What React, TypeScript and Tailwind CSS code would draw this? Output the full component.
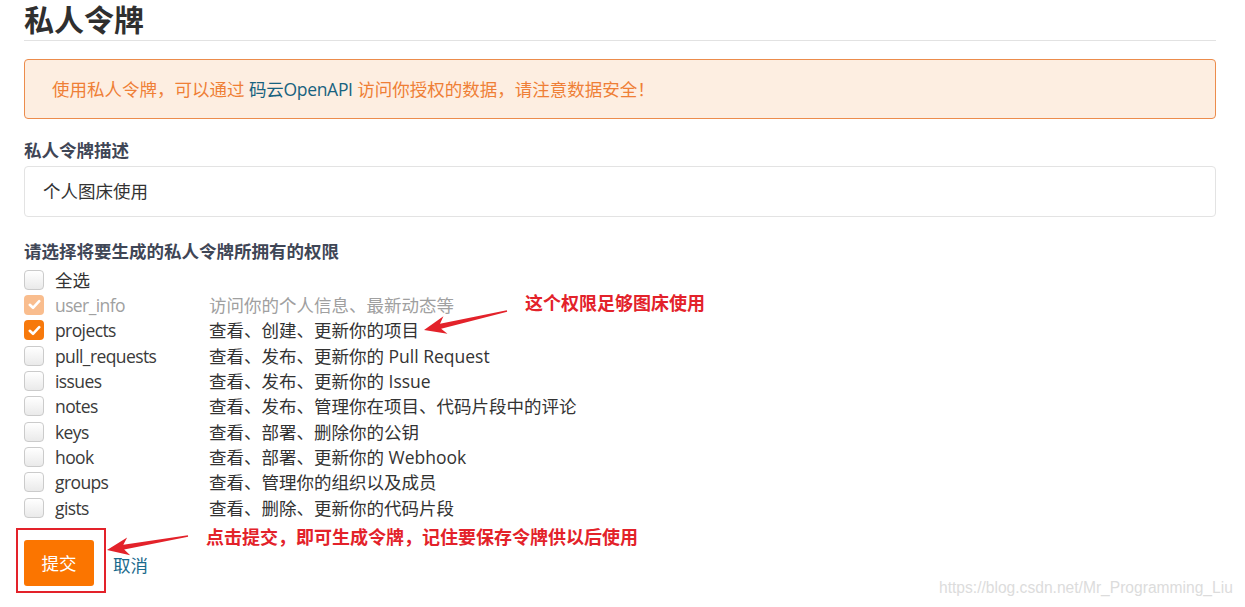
import React from "react";

const rows: { key: string; desc: string; state: "none" | "disabled" | "checked" }[] = [
  { key: "user_info", desc: "访问你的个人信息、最新动态等", state: "disabled" },
  { key: "projects", desc: "查看、创建、更新你的项目", state: "checked" },
  { key: "pull_requests", desc: "查看、发布、更新你的 Pull Request", state: "none" },
  { key: "issues", desc: "查看、发布、更新你的 Issue", state: "none" },
  { key: "notes", desc: "查看、发布、管理你在项目、代码片段中的评论", state: "none" },
  { key: "keys", desc: "查看、部署、删除你的公钥", state: "none" },
  { key: "hook", desc: "查看、部署、更新你的 Webhook", state: "none" },
  { key: "groups", desc: "查看、管理你的组织以及成员", state: "none" },
  { key: "gists", desc: "查看、删除、更新你的代码片段", state: "none" },
];

function Box({ state }: { state: "none" | "disabled" | "checked" }) {
  if (state === "none") {
    return (
      <span className="block w-[20px] h-[20px] rounded-[4px] border border-[#cbcbcb] bg-gradient-to-b from-[#ffffff] to-[#eaeaea] shrink-0" />
    );
  }
  const bg = state === "checked" ? "bg-[#f7790c]" : "bg-[#f9bd8e]";
  return (
    <span className={`flex items-center justify-center w-[20px] h-[20px] rounded-[4px] shrink-0 ${bg}`}>
      <svg width="13" height="11" viewBox="0 0 13 11">
        <path d="M1.8 5.8 L5 8.8 L11.2 2.2" fill="none" stroke="#ffffff" strokeWidth="2.6" strokeLinecap="round" strokeLinejoin="round" />
      </svg>
    </span>
  );
}

export default function App() {
  return (
    <div
      className="relative w-[1245px] h-[607px] bg-white overflow-hidden text-[#333333]"
      style={{ fontFamily: '"Open Sans", "Noto Sans CJK SC", sans-serif' }}
    >
      <div className="ml-[24px] w-[1192px]">
        <div className="h-[41px] pt-[1px] border-b border-[#e2e2e2]">
          <h1 className="text-[30px] leading-[34px] font-bold text-[#2f2f2f]" style={{ fontFamily: '"Noto Sans CJK SC", sans-serif' }}>
            私人令牌
          </h1>
        </div>
        <div className="mt-[18px] h-[60px] rounded-[4px] border border-[#ec8c4c] bg-[#fdeee1] flex items-center pl-[27px] text-[17.5px] text-[#ef7f36]">
          <span>使用私人令牌，可以通过&nbsp;</span>
          <span className="text-[#18627f] tracking-[-0.3px]">码云OpenAPI</span>
          <span>&nbsp;访问你授权的数据，请注意数据安全！</span>
        </div>
        <div className="mt-[19px] text-[17.5px] leading-[24px] font-bold text-[#3f4656]">私人令牌描述</div>
        <div className="mt-[4px] h-[51px] rounded-[4px] border border-[#e3e3e3] flex items-center pl-[18px] text-[17.5px] text-[#333333]">
          个人图床使用
        </div>
        <div className="mt-[22px] text-[17.5px] leading-[24px] font-bold text-[#3f4656]">请选择将要生成的私人令牌所拥有的权限</div>
        <div className="mt-[4px] flex flex-col">
          <div className="h-[25.33px] flex items-center">
            <Box state="none" />
            <span className="ml-[11px] text-[17.5px] leading-[24px] text-[#333333]">全选</span>
          </div>
          {rows.map((r) => (
            <div key={r.key} className="h-[25.33px] flex items-center">
              <Box state={r.state} />
              <span
                className={`ml-[11px] w-[154px] text-[17.5px] leading-[24px] tracking-[-0.6px] ${r.state === "disabled" ? "text-[#a0a0a0]" : "text-[#3a3a3a]"}`}
              >
                {r.key}
              </span>
              <span className={`text-[17.5px] leading-[24px] ${r.state === "disabled" ? "text-[#a0a0a0]" : "text-[#333333]"}`}>
                {r.desc}
              </span>
            </div>
          ))}
        </div>
        <div className="mt-[20px] flex items-center">
          <button className="w-[70px] h-[46px] rounded-[3px] bg-[#fb7500] text-white text-[17.5px]">提交</button>
          <a className="ml-[19px] mt-[3px] text-[17.5px] text-[#1a6a8c]">取消</a>
        </div>
      </div>

      {/* annotations */}
      <div className="absolute left-[16px] top-[528px] w-[90px] h-[65px] border-2 border-[#e3222a]" />
      <div
        className="absolute left-[525px] top-[289px] text-[18px] leading-[26px] font-bold text-[#e3222a]"
        style={{ fontFamily: '"Noto Sans CJK SC", sans-serif' }}
      >
        这个权限足够图床使用
      </div>
      <div
        className="absolute left-[206px] top-[523px] text-[18px] leading-[26px] font-bold text-[#e3222a]"
        style={{ fontFamily: '"Noto Sans CJK SC", sans-serif' }}
      >
        点击提交，即可生成令牌，记住要保存令牌供以后使用
      </div>
      <svg className="absolute left-0 top-0 pointer-events-none" width="1245" height="607">
        <polygon
          fill="#e3222a"
          points="424,330 447.46,333.87 441.14,328.65 507.17,311.73 506.83,310.27 440.02,323.77 443.44,316.31"
        />
        <polygon
          fill="#e3222a"
          points="107,550 130.2,555.13 124.18,549.57 188.13,536.74 187.87,535.26 123.33,544.65 127.14,537.4"
        />
      </svg>
      <div
        className="absolute left-[939px] top-[578px] text-[15.6px] leading-[20px] text-[#dcdcdc]"
        style={{ fontFamily: '"Liberation Sans", sans-serif' }}
      >
        https://blog.csdn.net/Mr_Programming_Liu
      </div>
    </div>
  );
}
